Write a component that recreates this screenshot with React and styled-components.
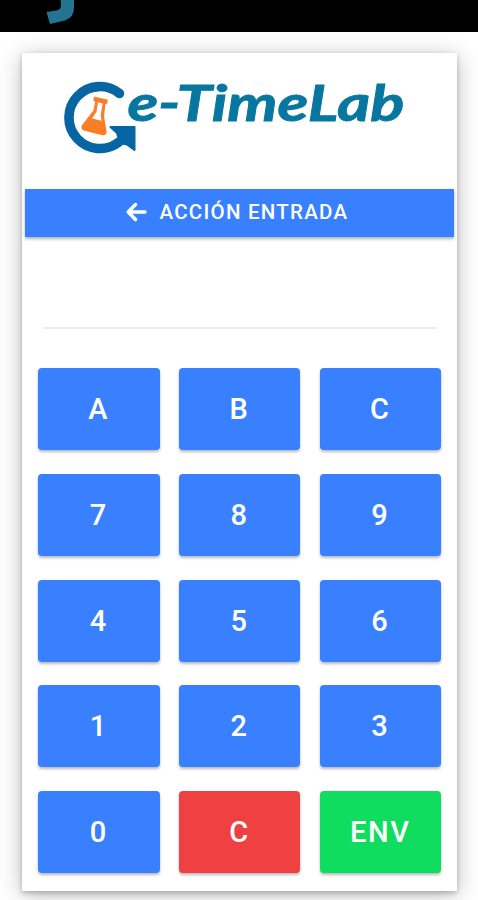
import styled, { createGlobalStyle } from "styled-components"

const keys = [
  { label: "A" },
  { label: "B" },
  { label: "C" },
  { label: "7" },
  { label: "8" },
  { label: "9" },
  { label: "4" },
  { label: "5" },
  { label: "6" },
  { label: "1" },
  { label: "2" },
  { label: "3" },
  { label: "0" },
  { label: "C", color: "#ef4141" },
  { label: "ENV", color: "#10dc60" },
]

const Logo = () => {
  return (
    <SLogo viewBox="0 0 360 84" role="img" aria-label="e-TimeLab">
      <path
        d="M57.500 20.500 A31 31 0 1 0 57 69"
        fill="none"
        stroke="#0865a3"
        strokeWidth="9.600"
        strokeLinecap="round"
      />
      <path
        d="M48.500 54 H72.500 V77 L65 71.500 L58 70 L55 60 Z"
        fill="#0865a3"
        stroke="#0865a3"
        strokeWidth="2"
        strokeLinejoin="round"
      />
      <path
        d="M32.500 24.500 L45 27.200 L44.500 30 L42.700 30.500 L41.300 43.500 L43.800 58.500 Q44 62 40.500 61.500 L22 56.800 Q19 55.500 20.800 52.500 L32.300 37.500 L34 28 L32.200 27.300 Z"
        fill="#fb7d25"
        stroke="#fb7d25"
        strokeWidth="1.500"
        strokeLinejoin="round"
      />
      <path d="M36 29.300 L40.700 30.500 L38.700 42 L39.700 47.700 L30 45.500 L34.500 38.700 Z" fill="#fff" />
      <SName x="65.500" y="47.700" textLength="277" lengthAdjust="spacingAndGlyphs">e-TimeLab</SName>
    </SLogo>
  )
}

const App = () => {
  return (
    <>
      <GlobalStyle />
      <StatusBar>
        <svg width="160" height="32" viewBox="0 0 160 32" aria-hidden="true">
          <path d="M60.700 0 H74 V8 Q74 17 65 20.500 L50 24 L46.500 12 L56 10.500 Q61 10 61 5 Z" fill="#247391" />
        </svg>
      </StatusBar>
      <Card>
        <Logo />
        <ActionButton>
          <svg width="21" height="20" viewBox="0 0 21 20" aria-hidden="true">
            <path
              d="M9.500 2.500 L2.200 10 L9.500 17.500 M2.500 10 H19"
              fill="none"
              stroke="#fff"
              strokeWidth="3.400"
              strokeLinecap="round"
              strokeLinejoin="round"
            />
          </svg>
          ACCIÓN ENTRADA
        </ActionButton>
        <CodeInput aria-label="Código" />
        <Keypad>
          {keys.map((key, i) => (
            <Key key={i} $color={key.color}>{key.label}</Key>
          ))}
        </Keypad>
      </Card>
    </>
  )
}

export default App

const GlobalStyle = createGlobalStyle`
  * {
    box-sizing: border-box;
  }
  body {
    margin: 0;
    height: 900px;
    overflow: hidden;
    background: #fff;
    font-family: Roboto, sans-serif;
  }
`

const StatusBar = styled.header`
  height: 32px;
  background: #000;
  svg {
    display: block;
  }
`

const Card = styled.main`
  width: 435.4px;
  height: 838px;
  margin: 21px 0 0 22px;
  padding: 20px 3px 0;
  background: #fff;
  box-shadow: 0 4px 22px rgba(0, 0, 0, 0.26), 0 2px 5px rgba(0, 0, 0, 0.22);
`

const SLogo = styled.svg`
  display: block;
  width: 360px;
  height: 84px;
  margin-left: 37px;
  overflow: visible;
`

const SName = styled.text`
  font-family: Lato, sans-serif;
  font-size: 49px;
  font-weight: 700;
  font-style: italic;
  fill: #0877a0;
  stroke: #0877a0;
  stroke-width: 0.9px;
`

const ActionButton = styled.button`
  display: flex;
  align-items: center;
  justify-content: center;
  gap: 12.5px;
  width: 429.4px;
  height: 48px;
  margin-top: 32px;
  padding: 0 5px 2px 0;
  border: 0;
  background: #3880ff;
  color: #fff;
  font-family: Roboto, sans-serif;
  font-size: 20.5px;
  font-weight: 500;
  letter-spacing: 1.25px;
  box-shadow: 0 2px 3px rgba(0, 0, 0, 0.3);
`

const CodeInput = styled.input`
  display: block;
  width: 394px;
  height: 60px;
  margin: 32px 0 0 17.5px;
  padding: 0;
  border: 0;
  border-bottom: 2px solid #ececec;
  outline: 0;
  background: transparent;
`

const Keypad = styled.div`
  display: grid;
  grid-template-columns: repeat(3, 121.5px);
  grid-auto-rows: 82px;
  gap: 23.75px 19.3px;
  margin: 39px 0 0 13px;
`

const Key = styled.button`
  padding: 0;
  border: 0;
  border-radius: 4px;
  background: ${(props) => props.$color || "#3880ff"};
  color: #fff;
  font-family: Roboto, sans-serif;
  font-size: 29px;
  font-weight: 500;
  letter-spacing: 1.75px;
  box-shadow: 0 2px 3px rgba(0, 0, 0, 0.28);
`
